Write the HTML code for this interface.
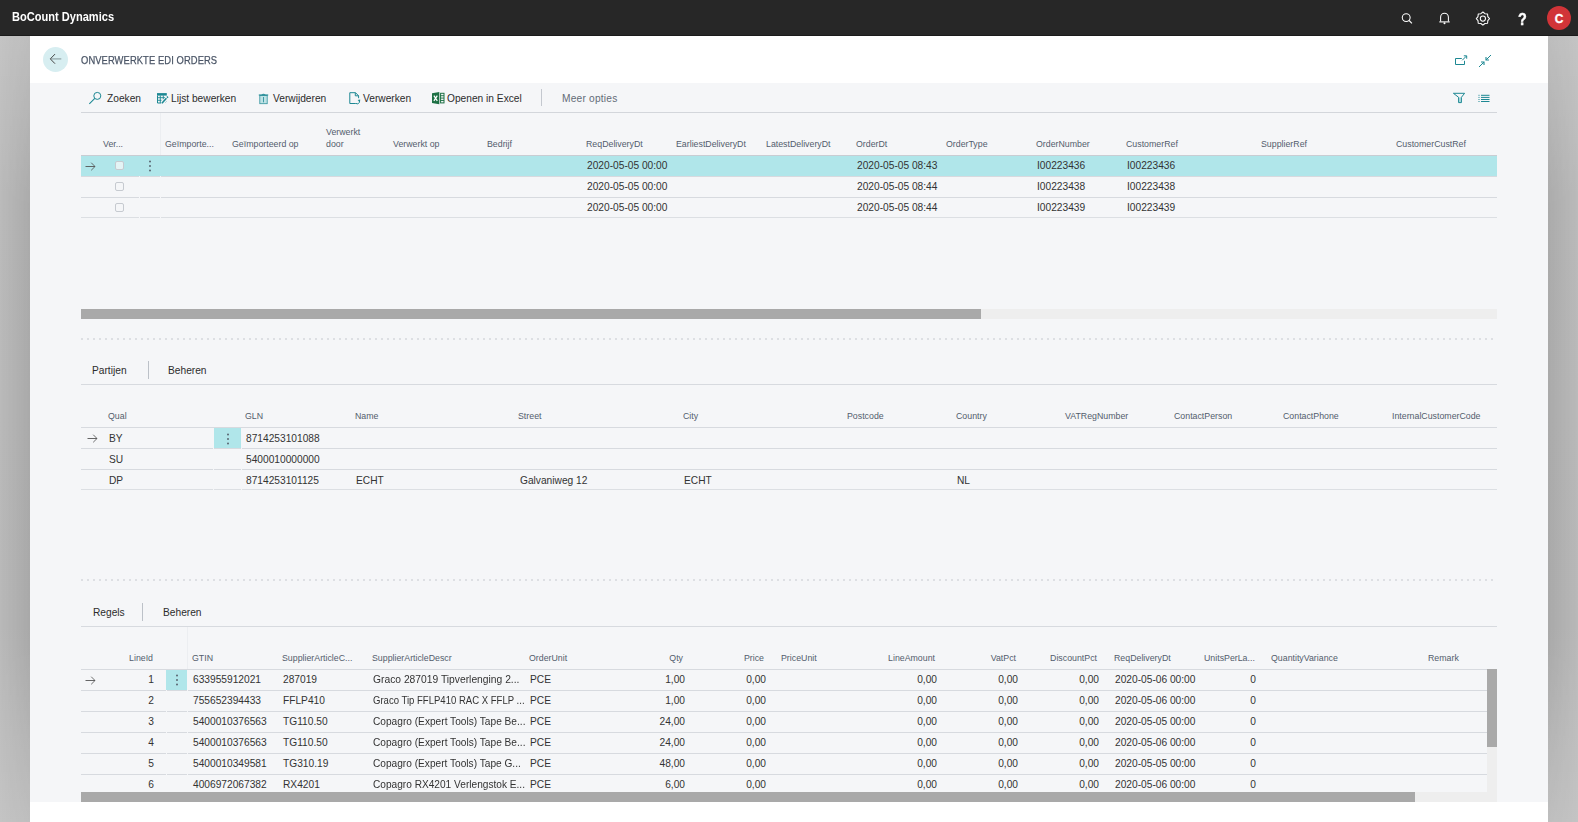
<!DOCTYPE html>
<html><head><meta charset="utf-8"><title>Onverwerkte EDI Orders</title>
<style>
html,body{margin:0;padding:0;}
body{width:1578px;height:822px;overflow:hidden;position:relative;background:#fff;font-family:"Liberation Sans", sans-serif;}
.t{position:absolute;white-space:nowrap;line-height:1;font-family:"Liberation Sans", sans-serif;}
svg{display:block}
</style></head><body>
<div style="position:absolute;left:0px;top:0px;width:1578px;height:36px;background:#272727"></div>
<div style="position:absolute;left:0px;top:35px;width:1578px;height:1px;background:#1b1b1b"></div>
<div class="t" style="left:12px;top:11px;font-size:12px;color:#ffffff;font-weight:bold;transform:scaleX(0.922);transform-origin:0 0">BoCount Dynamics</div>
<svg style="position:absolute;left:1398px;top:10px" width="18" height="18" viewBox="1398 10 18 18"><circle cx="1406.2" cy="17.6" r="3.95" fill="none" stroke="#fff" stroke-width="1.05"/><line x1="1409.1" y1="20.5" x2="1411.9" y2="23.3" stroke="#fff" stroke-width="1.1"/></svg>
<svg style="position:absolute;left:1436px;top:10px" width="16" height="16" viewBox="1436 10 16 16"><path d="M1440.6 21.6 V17.2 A3.9 3.9 0 0 1 1448.4 17.2 V21.6" fill="none" stroke="#fff" stroke-width="1.05"/><line x1="1439.3" y1="21.9" x2="1449.7" y2="21.9" stroke="#fff" stroke-width="1.1"/><circle cx="1444.5" cy="23.2" r="1" fill="#fff"/></svg>
<svg style="position:absolute;left:1472px;top:8px" width="22" height="22" viewBox="1472 8 22 22"><path d="M1482.90 12.00 L1484.93 13.70 L1487.57 13.93 L1487.80 16.57 L1489.50 18.60 L1487.80 20.63 L1487.57 23.27 L1484.93 23.50 L1482.90 25.20 L1480.87 23.50 L1478.23 23.27 L1478.00 20.63 L1476.30 18.60 L1478.00 16.57 L1478.23 13.93 L1480.87 13.70 Z" fill="none" stroke="#fff" stroke-width="1.05" stroke-linejoin="round"/><circle cx="1482.9" cy="18.6" r="2.6" fill="none" stroke="#fff" stroke-width="1.05"/></svg>
<div class="t" style="left:1518px;top:12px;font-size:16px;color:#ffffff;font-weight:bold;transform:scaleX(0.9);transform-origin:0 0;-webkit-text-stroke:0.4px #fff">?</div>
<div style="position:absolute;left:1547px;top:6px;width:24px;height:24px;background:#d13438;border-radius:50%"></div>
<div class="t" style="left:1547px;top:13px;font-size:12px;color:#ffffff;font-weight:bold;width:24px;text-align:center;-webkit-text-stroke:0.3px #fff">C</div>
<svg style="position:absolute;left:0px;top:36px" width="30" height="786" viewBox="0 0 30 786"><defs><linearGradient id="g0v" x1="0" y1="0" x2="0" y2="1"><stop offset="0" stop-color="#c4c4c4"/><stop offset="0.2" stop-color="#bbbbbb"/><stop offset="0.75" stop-color="#b9b9b9"/><stop offset="1" stop-color="#c4c4c4"/></linearGradient><linearGradient id="g0h" x1="0" y1="0" x2="1" y2="0"><stop offset="0" stop-color="#000" stop-opacity="0"/><stop offset="1" stop-color="#000" stop-opacity="0.085"/></linearGradient><linearGradient id="g0m" x1="0" y1="0" x2="0" y2="1"><stop offset="0" stop-color="#fff" stop-opacity="0.35"/><stop offset="0.22" stop-color="#fff" stop-opacity="1"/><stop offset="0.78" stop-color="#fff" stop-opacity="1"/><stop offset="1" stop-color="#fff" stop-opacity="0.3"/></linearGradient><mask id="g0mk"><rect width="30" height="786" fill="url(#g0m)"/></mask></defs><rect width="30" height="786" fill="url(#g0v)"/><rect width="30" height="786" fill="url(#g0h)" mask="url(#g0mk)"/></svg>
<svg style="position:absolute;left:1548px;top:36px" width="30" height="786" viewBox="0 0 30 786"><defs><linearGradient id="g1548v" x1="0" y1="0" x2="0" y2="1"><stop offset="0" stop-color="#c4c4c4"/><stop offset="0.2" stop-color="#bbbbbb"/><stop offset="0.75" stop-color="#b9b9b9"/><stop offset="1" stop-color="#c4c4c4"/></linearGradient><linearGradient id="g1548h" x1="1" y1="0" x2="0" y2="0"><stop offset="0" stop-color="#000" stop-opacity="0"/><stop offset="1" stop-color="#000" stop-opacity="0.085"/></linearGradient><linearGradient id="g1548m" x1="0" y1="0" x2="0" y2="1"><stop offset="0" stop-color="#fff" stop-opacity="0.35"/><stop offset="0.22" stop-color="#fff" stop-opacity="1"/><stop offset="0.78" stop-color="#fff" stop-opacity="1"/><stop offset="1" stop-color="#fff" stop-opacity="0.3"/></linearGradient><mask id="g1548mk"><rect width="30" height="786" fill="url(#g1548m)"/></mask></defs><rect width="30" height="786" fill="url(#g1548v)"/><rect width="30" height="786" fill="url(#g1548h)" mask="url(#g1548mk)"/></svg>
<div style="position:absolute;left:30px;top:36px;width:1518px;height:786px;background:#ffffff"></div>
<div style="position:absolute;left:30px;top:83px;width:1518px;height:719px;background:#f5f6f8"></div>
<div style="position:absolute;left:43px;top:47px;width:25px;height:25px;background:#d7eef1;border-radius:50%"></div>
<svg style="position:absolute;left:46px;top:50px" width="20" height="18" viewBox="46 50 20 18"><line x1="51" y1="58.9" x2="61.3" y2="58.9" stroke="#93a7a9" stroke-width="1.25"/><path d="M55 54.1 L50.3 58.9 L55 63.7" fill="none" stroke="#3c3c3c" stroke-width="0.95"/></svg>
<div class="t" style="left:81px;top:55px;font-size:11px;color:#4a5566;font-weight:normal;transform:scaleX(0.853);transform-origin:0 0;letter-spacing:0.1px;-webkit-text-stroke:0.25px #4a5566">ONVERWERKTE EDI ORDERS</div>
<svg style="position:absolute;left:1452px;top:52px" width="18" height="16" viewBox="1452 52 18 16"><path d="M1461.8 58.5 H1455.5 V64.5 H1464.5 V60.8" fill="none" stroke="#1d8893" stroke-width="1"/><line x1="1462.2" y1="60.3" x2="1466.3" y2="56.2" stroke="#1d8893" stroke-width="1"/><path d="M1463.8 55.8 H1466.7 V58.7" fill="none" stroke="#1d8893" stroke-width="1"/></svg>
<svg style="position:absolute;left:1476px;top:52px" width="18" height="18" viewBox="1476 52 18 18"><line x1="1479" y1="67" x2="1483.8" y2="62.2" stroke="#1d8893" stroke-width="1"/><path d="M1481 62 H1484 V65" fill="none" stroke="#1d8893" stroke-width="1.1"/><line x1="1491" y1="55" x2="1486.2" y2="59.8" stroke="#1d8893" stroke-width="1"/><path d="M1489 60 H1486 V57" fill="none" stroke="#1d8893" stroke-width="1.1"/></svg>
<svg style="position:absolute;left:86px;top:89px" width="16" height="17" viewBox="86 89 16 17"><circle cx="97.3" cy="95.9" r="3.5" fill="none" stroke="#1d8893" stroke-width="1"/><line x1="94.8" y1="98.4" x2="89.3" y2="103.8" stroke="#1d8893" stroke-width="1.05"/></svg>
<div class="t" style="left:107px;top:94px;font-size:10.2px;color:#2c2c2c;font-weight:normal;">Zoeken</div>
<svg style="position:absolute;left:155px;top:91px" width="15" height="15" viewBox="155 91 15 15"><rect x="157" y="93.1" width="9.8" height="2.5" fill="#1d8893"/><path d="M157.5 95.5 V103 H161.2" fill="none" stroke="#1d8893" stroke-width="1"/><path d="M157.5 97.7 H165 M157.5 100.3 H161.5 M160.3 95.5 V103 M163.3 95.5 V99.5" fill="none" stroke="#1d8893" stroke-width="0.9"/><line x1="161.9" y1="103.3" x2="166.4" y2="98.3" stroke="#f5f6f8" stroke-width="3"/><line x1="161.9" y1="103.3" x2="166.4" y2="98.3" stroke="#1d8893" stroke-width="1.6"/><line x1="167" y1="97.6" x2="167.9" y2="96.6" stroke="#1d8893" stroke-width="1.6"/><line x1="165.5" y1="102.5" x2="166.5" y2="101.5" stroke="#1d8893" stroke-width="0.9" opacity="0.6"/></svg>
<div class="t" style="left:171px;top:94px;font-size:10.2px;color:#2c2c2c;font-weight:normal;">Lijst bewerken</div>
<svg style="position:absolute;left:257px;top:91px" width="13" height="15" viewBox="257 91 13 15"><rect x="259.8" y="95.6" width="7.4" height="8.1" fill="#b9e0e4" stroke="#1d8893" stroke-width="0.8" opacity="0.9"/><line x1="258.8" y1="95" x2="268.2" y2="95" stroke="#1d8893" stroke-width="1.1"/><path d="M261.3 94.8 Q263.5 92.6 265.7 94.8 Z" fill="#1d8893"/><line x1="263.5" y1="97" x2="263.5" y2="102.3" stroke="#1d8893" stroke-width="0.8"/></svg>
<div class="t" style="left:273px;top:94px;font-size:10.2px;color:#2c2c2c;font-weight:normal;">Verwijderen</div>
<svg style="position:absolute;left:347px;top:90px" width="15" height="16" viewBox="347 90 15 16"><path d="M355.8 103.5 H349.8 V92.7 H355.5 L358.6 95.8 V98.2" fill="none" stroke="#1d8893" stroke-width="1"/><path d="M355.3 92.7 V95.8 H358.6" fill="none" stroke="#1d8893" stroke-width="1"/><path d="M356 103.4 A2.2 2.2 0 0 0 359.4 101" fill="none" stroke="#1d8893" stroke-width="1"/><path d="M357.6 99.9 L360.2 99.6 L360 102.2 Z" fill="#1d8893"/></svg>
<div class="t" style="left:363px;top:94px;font-size:10.2px;color:#2c2c2c;font-weight:normal;">Verwerken</div>
<svg style="position:absolute;left:430px;top:90px" width="16" height="16" viewBox="430 90 16 16"><path d="M432 93.2 L439.3 91.9 V104.2 L432 102.9 Z" fill="#1d7044"/><path d="M433.9 95.7 L437.3 100.9 M437.3 95.7 L433.9 100.9" stroke="#fff" stroke-width="1.25"/><rect x="440.6" y="93.3" width="3.4" height="9.6" fill="none" stroke="#1d7044" stroke-width="1"/><path d="M440.3 95.7 H444 M440.3 98.1 H444 M440.3 100.5 H444" stroke="#1d7044" stroke-width="0.9"/></svg>
<div class="t" style="left:447px;top:94px;font-size:10.2px;color:#2c2c2c;font-weight:normal;">Openen in Excel</div>
<div style="position:absolute;left:541px;top:89px;width:1px;height:17px;background:#c4c8cf"></div>
<div class="t" style="left:562px;top:94px;font-size:10.2px;color:#636b77;font-weight:normal;letter-spacing:0.2px">Meer opties</div>
<svg style="position:absolute;left:1451px;top:91px" width="16" height="14" viewBox="1451 91 16 14"><path d="M1458.6 97.5 V102.6 H1461.4 V97.5 Z" fill="#b3dfe3"/><path d="M1453.4 93.3 H1464.6 L1461.4 97.3 V102.6 H1458.6 V97.3 Z" fill="none" stroke="#1d8893" stroke-width="1" stroke-linejoin="round"/></svg>
<svg style="position:absolute;left:1477px;top:93px" width="14" height="10" viewBox="1477 93 14 10"><g fill="#1d8893"><rect x="1478.5" y="94.8" width="1" height="1"/><rect x="1481" y="94.8" width="8.5" height="1"/><rect x="1478.5" y="96.9" width="1" height="1"/><rect x="1481" y="96.9" width="8.5" height="1"/><rect x="1478.5" y="99" width="1" height="1"/><rect x="1481" y="99" width="8.5" height="1"/><rect x="1478.5" y="101" width="1" height="1"/><rect x="1481" y="101" width="8.5" height="1"/></g></svg>
<div style="position:absolute;left:81px;top:112px;width:1416px;height:1px;background:#d3d6db"></div>
<div style="position:absolute;left:160px;top:113px;width:1px;height:42px;background:#eceef1"></div>
<div class="t" style="left:103px;top:140px;font-size:8.8px;color:#535d6c;font-weight:normal;">Ver...</div>
<div class="t" style="left:165px;top:140px;font-size:8.8px;color:#535d6c;font-weight:normal;">Geïmporte...</div>
<div class="t" style="left:232px;top:140px;font-size:8.8px;color:#535d6c;font-weight:normal;">Geïmporteerd op</div>
<div class="t" style="left:393px;top:140px;font-size:8.8px;color:#535d6c;font-weight:normal;">Verwerkt op</div>
<div class="t" style="left:487px;top:140px;font-size:8.8px;color:#535d6c;font-weight:normal;">Bedrijf</div>
<div class="t" style="left:586px;top:140px;font-size:8.8px;color:#535d6c;font-weight:normal;">ReqDeliveryDt</div>
<div class="t" style="left:676px;top:140px;font-size:8.8px;color:#535d6c;font-weight:normal;">EarliestDeliveryDt</div>
<div class="t" style="left:766px;top:140px;font-size:8.8px;color:#535d6c;font-weight:normal;">LatestDeliveryDt</div>
<div class="t" style="left:856px;top:140px;font-size:8.8px;color:#535d6c;font-weight:normal;">OrderDt</div>
<div class="t" style="left:946px;top:140px;font-size:8.8px;color:#535d6c;font-weight:normal;">OrderType</div>
<div class="t" style="left:1036px;top:140px;font-size:8.8px;color:#535d6c;font-weight:normal;">OrderNumber</div>
<div class="t" style="left:1126px;top:140px;font-size:8.8px;color:#535d6c;font-weight:normal;">CustomerRef</div>
<div class="t" style="left:1261px;top:140px;font-size:8.8px;color:#535d6c;font-weight:normal;">SupplierRef</div>
<div class="t" style="left:1396px;top:140px;font-size:8.8px;color:#535d6c;font-weight:normal;">CustomerCustRef</div>
<div class="t" style="left:326px;top:128px;font-size:8.8px;color:#535d6c;font-weight:normal;">Verwerkt</div>
<div class="t" style="left:326px;top:140px;font-size:8.8px;color:#535d6c;font-weight:normal;">door</div>
<div style="position:absolute;left:81px;top:155px;width:1416px;height:1px;background:#c9cdd3"></div>
<div style="position:absolute;left:81px;top:156px;width:1416px;height:20px;background:#b0e6ea"></div>
<div style="position:absolute;left:81px;top:176px;width:1416px;height:1px;background:#d7dadf"></div>
<div style="position:absolute;left:81px;top:197px;width:1416px;height:1px;background:#d7dadf"></div>
<div style="position:absolute;left:81px;top:217px;width:1416px;height:1px;background:#dcdfe3"></div>
<svg style="position:absolute;left:85px;top:162px" width="12" height="10" viewBox="0 0 12 10"><line x1="0.5" y1="4.5" x2="10" y2="4.5" stroke="#555" stroke-width="0.9"/><path d="M6.2 0.7 L10 4.5 L6.2 8.3" fill="none" stroke="#555" stroke-width="0.85"/></svg>
<svg style="position:absolute;left:147px;top:158.5px" width="6" height="14" viewBox="0 0 6 14"><circle cx="3" cy="2.5" r="0.95" fill="#56606b"/><circle cx="3" cy="7" r="0.95" fill="#56606b"/><circle cx="3" cy="11.5" r="0.95" fill="#56606b"/></svg>
<div style="position:absolute;left:115px;top:161px;width:9px;height:9px;border:1px solid #c6cad0;border-radius:2px;box-sizing:border-box;background:#e4f4f5"></div>
<div style="position:absolute;left:115px;top:182px;width:9px;height:9px;border:1px solid #c6cad0;border-radius:2px;box-sizing:border-box;background:transparent"></div>
<div style="position:absolute;left:115px;top:203px;width:9px;height:9px;border:1px solid #c6cad0;border-radius:2px;box-sizing:border-box;background:transparent"></div>
<div style="position:absolute;left:139px;top:176px;width:1px;height:1px;background:#f5f6f8"></div>
<div style="position:absolute;left:160px;top:176px;width:1px;height:1px;background:#f5f6f8"></div>
<div style="position:absolute;left:139px;top:197px;width:1px;height:1px;background:#f5f6f8"></div>
<div style="position:absolute;left:160px;top:197px;width:1px;height:1px;background:#f5f6f8"></div>
<div style="position:absolute;left:139px;top:217px;width:1px;height:1px;background:#f5f6f8"></div>
<div style="position:absolute;left:160px;top:217px;width:1px;height:1px;background:#f5f6f8"></div>
<div class="t" style="left:587px;top:161px;font-size:10.2px;color:#333333;font-weight:normal;">2020-05-05 00:00</div>
<div class="t" style="left:857px;top:161px;font-size:10.2px;color:#333333;font-weight:normal;">2020-05-05 08:43</div>
<div class="t" style="left:1037px;top:161px;font-size:10.2px;color:#333333;font-weight:normal;">I00223436</div>
<div class="t" style="left:1127px;top:161px;font-size:10.2px;color:#333333;font-weight:normal;">I00223436</div>
<div class="t" style="left:587px;top:182px;font-size:10.2px;color:#333333;font-weight:normal;">2020-05-05 00:00</div>
<div class="t" style="left:857px;top:182px;font-size:10.2px;color:#333333;font-weight:normal;">2020-05-05 08:44</div>
<div class="t" style="left:1037px;top:182px;font-size:10.2px;color:#333333;font-weight:normal;">I00223438</div>
<div class="t" style="left:1127px;top:182px;font-size:10.2px;color:#333333;font-weight:normal;">I00223438</div>
<div class="t" style="left:587px;top:203px;font-size:10.2px;color:#333333;font-weight:normal;">2020-05-05 00:00</div>
<div class="t" style="left:857px;top:203px;font-size:10.2px;color:#333333;font-weight:normal;">2020-05-05 08:44</div>
<div class="t" style="left:1037px;top:203px;font-size:10.2px;color:#333333;font-weight:normal;">I00223439</div>
<div class="t" style="left:1127px;top:203px;font-size:10.2px;color:#333333;font-weight:normal;">I00223439</div>
<div style="position:absolute;left:81px;top:309px;width:1416px;height:10px;background:#eeeeee"></div>
<div style="position:absolute;left:81px;top:309px;width:900px;height:10px;background:#a9a9a9"></div>
<div style="position:absolute;left:81px;top:338px;width:1416px;height:2px;background-image:linear-gradient(90deg,#dddfe3 2px,transparent 2px);background-size:6px 2px"></div>
<div class="t" style="left:92px;top:366px;font-size:10.2px;color:#2c2c2c;font-weight:normal;">Partijen</div>
<div style="position:absolute;left:148px;top:361px;width:1px;height:18px;background:#bcc1c8"></div>
<div class="t" style="left:168px;top:366px;font-size:10.2px;color:#2c2c2c;font-weight:normal;">Beheren</div>
<div style="position:absolute;left:81px;top:384px;width:1416px;height:1px;background:#d7dadf"></div>
<div class="t" style="left:108px;top:412px;font-size:8.8px;color:#535d6c;font-weight:normal;">Qual</div>
<div class="t" style="left:245px;top:412px;font-size:8.8px;color:#535d6c;font-weight:normal;">GLN</div>
<div class="t" style="left:355px;top:412px;font-size:8.8px;color:#535d6c;font-weight:normal;">Name</div>
<div class="t" style="left:518px;top:412px;font-size:8.8px;color:#535d6c;font-weight:normal;">Street</div>
<div class="t" style="left:683px;top:412px;font-size:8.8px;color:#535d6c;font-weight:normal;">City</div>
<div class="t" style="left:847px;top:412px;font-size:8.8px;color:#535d6c;font-weight:normal;">Postcode</div>
<div class="t" style="left:956px;top:412px;font-size:8.8px;color:#535d6c;font-weight:normal;">Country</div>
<div class="t" style="left:1065px;top:412px;font-size:8.8px;color:#535d6c;font-weight:normal;">VATRegNumber</div>
<div class="t" style="left:1174px;top:412px;font-size:8.8px;color:#535d6c;font-weight:normal;">ContactPerson</div>
<div class="t" style="left:1283px;top:412px;font-size:8.8px;color:#535d6c;font-weight:normal;">ContactPhone</div>
<div class="t" style="left:1392px;top:412px;font-size:8.8px;color:#535d6c;font-weight:normal;">InternalCustomerCode</div>
<div style="position:absolute;left:81px;top:427px;width:1416px;height:1px;background:#d7dadf"></div>
<div style="position:absolute;left:81px;top:448px;width:1416px;height:1px;background:#d7dadf"></div>
<div style="position:absolute;left:81px;top:469px;width:1416px;height:1px;background:#d7dadf"></div>
<div style="position:absolute;left:81px;top:489px;width:1416px;height:1px;background:#dcdfe3"></div>
<div style="position:absolute;left:214px;top:428px;width:27px;height:20px;background:#b0e6ea"></div>
<div style="position:absolute;left:213px;top:448px;width:1px;height:1px;background:#f5f6f8"></div>
<div style="position:absolute;left:241px;top:448px;width:1px;height:1px;background:#f5f6f8"></div>
<div style="position:absolute;left:213px;top:469px;width:1px;height:1px;background:#f5f6f8"></div>
<div style="position:absolute;left:241px;top:469px;width:1px;height:1px;background:#f5f6f8"></div>
<div style="position:absolute;left:213px;top:489px;width:1px;height:1px;background:#f5f6f8"></div>
<div style="position:absolute;left:241px;top:489px;width:1px;height:1px;background:#f5f6f8"></div>
<svg style="position:absolute;left:225px;top:431.5px" width="6" height="14" viewBox="0 0 6 14"><circle cx="3" cy="2.5" r="0.95" fill="#56606b"/><circle cx="3" cy="7" r="0.95" fill="#56606b"/><circle cx="3" cy="11.5" r="0.95" fill="#56606b"/></svg>
<svg style="position:absolute;left:87px;top:434px" width="12" height="10" viewBox="0 0 12 10"><line x1="0.5" y1="4.5" x2="10" y2="4.5" stroke="#555" stroke-width="0.9"/><path d="M6.2 0.7 L10 4.5 L6.2 8.3" fill="none" stroke="#555" stroke-width="0.85"/></svg>
<div class="t" style="left:109px;top:434px;font-size:10.2px;color:#333333;font-weight:normal;">BY</div>
<div class="t" style="left:246px;top:434px;font-size:10.2px;color:#333333;font-weight:normal;">8714253101088</div>
<div class="t" style="left:109px;top:455px;font-size:10.2px;color:#333333;font-weight:normal;">SU</div>
<div class="t" style="left:246px;top:455px;font-size:10.2px;color:#333333;font-weight:normal;">5400010000000</div>
<div class="t" style="left:109px;top:476px;font-size:10.2px;color:#333333;font-weight:normal;">DP</div>
<div class="t" style="left:246px;top:476px;font-size:10.2px;color:#333333;font-weight:normal;">8714253101125</div>
<div class="t" style="left:356px;top:476px;font-size:10.2px;color:#333333;font-weight:normal;">ECHT</div>
<div class="t" style="left:520px;top:476px;font-size:10.2px;color:#333333;font-weight:normal;">Galvaniweg 12</div>
<div class="t" style="left:684px;top:476px;font-size:10.2px;color:#333333;font-weight:normal;">ECHT</div>
<div class="t" style="left:957px;top:476px;font-size:10.2px;color:#333333;font-weight:normal;">NL</div>
<div style="position:absolute;left:81px;top:579px;width:1416px;height:2px;background-image:linear-gradient(90deg,#dddfe3 2px,transparent 2px);background-size:6px 2px"></div>
<div class="t" style="left:93px;top:608px;font-size:10.2px;color:#2c2c2c;font-weight:normal;">Regels</div>
<div style="position:absolute;left:142px;top:603px;width:1px;height:18px;background:#bcc1c8"></div>
<div class="t" style="left:163px;top:608px;font-size:10.2px;color:#2c2c2c;font-weight:normal;">Beheren</div>
<div style="position:absolute;left:81px;top:626px;width:1416px;height:1px;background:#d7dadf"></div>
<div style="position:absolute;left:187px;top:627px;width:1px;height:42px;background:#eceef1"></div>
<div class="t" style="left:-247px;width:400px;text-align:right;top:654px;font-size:8.8px;color:#535d6c;font-weight:normal;">LineId</div>
<div class="t" style="left:192px;top:654px;font-size:8.8px;color:#535d6c;font-weight:normal;">GTIN</div>
<div class="t" style="left:282px;top:654px;font-size:8.8px;color:#535d6c;font-weight:normal;">SupplierArticleC...</div>
<div class="t" style="left:372px;top:654px;font-size:8.8px;color:#535d6c;font-weight:normal;">SupplierArticleDescr</div>
<div class="t" style="left:529px;top:654px;font-size:8.8px;color:#535d6c;font-weight:normal;">OrderUnit</div>
<div class="t" style="left:283px;width:400px;text-align:right;top:654px;font-size:8.8px;color:#535d6c;font-weight:normal;">Qty</div>
<div class="t" style="left:364px;width:400px;text-align:right;top:654px;font-size:8.8px;color:#535d6c;font-weight:normal;">Price</div>
<div class="t" style="left:781px;top:654px;font-size:8.8px;color:#535d6c;font-weight:normal;">PriceUnit</div>
<div class="t" style="left:535px;width:400px;text-align:right;top:654px;font-size:8.8px;color:#535d6c;font-weight:normal;">LineAmount</div>
<div class="t" style="left:616px;width:400px;text-align:right;top:654px;font-size:8.8px;color:#535d6c;font-weight:normal;">VatPct</div>
<div class="t" style="left:697px;width:400px;text-align:right;top:654px;font-size:8.8px;color:#535d6c;font-weight:normal;">DiscountPct</div>
<div class="t" style="left:1114px;top:654px;font-size:8.8px;color:#535d6c;font-weight:normal;">ReqDeliveryDt</div>
<div class="t" style="left:1204px;top:654px;font-size:8.8px;color:#535d6c;font-weight:normal;">UnitsPerLa...</div>
<div class="t" style="left:1271px;top:654px;font-size:8.8px;color:#535d6c;font-weight:normal;">QuantityVariance</div>
<div class="t" style="left:1428px;top:654px;font-size:8.8px;color:#535d6c;font-weight:normal;">Remark</div>
<div style="position:absolute;left:81px;top:669px;width:1406px;height:1px;background:#d7dadf"></div>
<div style="position:absolute;left:81px;top:690px;width:1406px;height:1px;background:#d7dadf"></div>
<div style="position:absolute;left:81px;top:711px;width:1406px;height:1px;background:#d7dadf"></div>
<div style="position:absolute;left:81px;top:732px;width:1406px;height:1px;background:#d7dadf"></div>
<div style="position:absolute;left:81px;top:753px;width:1406px;height:1px;background:#d7dadf"></div>
<div style="position:absolute;left:81px;top:774px;width:1406px;height:1px;background:#d7dadf"></div>
<div style="position:absolute;left:166px;top:670px;width:21px;height:20px;background:#b0e6ea"></div>
<div style="position:absolute;left:166px;top:690px;width:1px;height:1px;background:#f5f6f8"></div>
<div style="position:absolute;left:187px;top:690px;width:1px;height:1px;background:#f5f6f8"></div>
<div style="position:absolute;left:166px;top:711px;width:1px;height:1px;background:#f5f6f8"></div>
<div style="position:absolute;left:187px;top:711px;width:1px;height:1px;background:#f5f6f8"></div>
<div style="position:absolute;left:166px;top:732px;width:1px;height:1px;background:#f5f6f8"></div>
<div style="position:absolute;left:187px;top:732px;width:1px;height:1px;background:#f5f6f8"></div>
<div style="position:absolute;left:166px;top:753px;width:1px;height:1px;background:#f5f6f8"></div>
<div style="position:absolute;left:187px;top:753px;width:1px;height:1px;background:#f5f6f8"></div>
<div style="position:absolute;left:166px;top:774px;width:1px;height:1px;background:#f5f6f8"></div>
<div style="position:absolute;left:187px;top:774px;width:1px;height:1px;background:#f5f6f8"></div>
<svg style="position:absolute;left:173.5px;top:673px" width="6" height="14" viewBox="0 0 6 14"><circle cx="3" cy="2.5" r="0.95" fill="#56606b"/><circle cx="3" cy="7" r="0.95" fill="#56606b"/><circle cx="3" cy="11.5" r="0.95" fill="#56606b"/></svg>
<svg style="position:absolute;left:85px;top:676px" width="12" height="10" viewBox="0 0 12 10"><line x1="0.5" y1="4.5" x2="10" y2="4.5" stroke="#555" stroke-width="0.9"/><path d="M6.2 0.7 L10 4.5 L6.2 8.3" fill="none" stroke="#555" stroke-width="0.85"/></svg>
<div class="t" style="left:-246px;width:400px;text-align:right;top:675px;font-size:10.2px;color:#333333;font-weight:normal;">1</div>
<div class="t" style="left:193px;top:675px;font-size:10.2px;color:#333333;font-weight:normal;">633955912021</div>
<div class="t" style="left:283px;top:675px;font-size:10.2px;color:#333333;font-weight:normal;">287019</div>
<div class="t" style="left:373px;top:675px;font-size:10.2px;color:#333333;font-weight:normal;transform:scaleX(1.01);transform-origin:0 0">Graco 287019 Tipverlenging 2...</div>
<div class="t" style="left:530px;top:675px;font-size:10.2px;color:#333333;font-weight:normal;">PCE</div>
<div class="t" style="left:285px;width:400px;text-align:right;top:675px;font-size:10.2px;color:#333333;font-weight:normal;">1,00</div>
<div class="t" style="left:366px;width:400px;text-align:right;top:675px;font-size:10.2px;color:#333333;font-weight:normal;">0,00</div>
<div class="t" style="left:537px;width:400px;text-align:right;top:675px;font-size:10.2px;color:#333333;font-weight:normal;">0,00</div>
<div class="t" style="left:618px;width:400px;text-align:right;top:675px;font-size:10.2px;color:#333333;font-weight:normal;">0,00</div>
<div class="t" style="left:699px;width:400px;text-align:right;top:675px;font-size:10.2px;color:#333333;font-weight:normal;">0,00</div>
<div class="t" style="left:1115px;top:675px;font-size:10.2px;color:#333333;font-weight:normal;">2020-05-06 00:00</div>
<div class="t" style="left:856px;width:400px;text-align:right;top:675px;font-size:10.2px;color:#333333;font-weight:normal;">0</div>
<div class="t" style="left:-246px;width:400px;text-align:right;top:696px;font-size:10.2px;color:#333333;font-weight:normal;">2</div>
<div class="t" style="left:193px;top:696px;font-size:10.2px;color:#333333;font-weight:normal;">755652394433</div>
<div class="t" style="left:283px;top:696px;font-size:10.2px;color:#333333;font-weight:normal;">FFLP410</div>
<div class="t" style="left:373px;top:696px;font-size:10.2px;color:#333333;font-weight:normal;transform:scaleX(0.937);transform-origin:0 0">Graco Tip FFLP410 RAC X FFLP ...</div>
<div class="t" style="left:530px;top:696px;font-size:10.2px;color:#333333;font-weight:normal;">PCE</div>
<div class="t" style="left:285px;width:400px;text-align:right;top:696px;font-size:10.2px;color:#333333;font-weight:normal;">1,00</div>
<div class="t" style="left:366px;width:400px;text-align:right;top:696px;font-size:10.2px;color:#333333;font-weight:normal;">0,00</div>
<div class="t" style="left:537px;width:400px;text-align:right;top:696px;font-size:10.2px;color:#333333;font-weight:normal;">0,00</div>
<div class="t" style="left:618px;width:400px;text-align:right;top:696px;font-size:10.2px;color:#333333;font-weight:normal;">0,00</div>
<div class="t" style="left:699px;width:400px;text-align:right;top:696px;font-size:10.2px;color:#333333;font-weight:normal;">0,00</div>
<div class="t" style="left:1115px;top:696px;font-size:10.2px;color:#333333;font-weight:normal;">2020-05-06 00:00</div>
<div class="t" style="left:856px;width:400px;text-align:right;top:696px;font-size:10.2px;color:#333333;font-weight:normal;">0</div>
<div class="t" style="left:-246px;width:400px;text-align:right;top:717px;font-size:10.2px;color:#333333;font-weight:normal;">3</div>
<div class="t" style="left:193px;top:717px;font-size:10.2px;color:#333333;font-weight:normal;">5400010376563</div>
<div class="t" style="left:283px;top:717px;font-size:10.2px;color:#333333;font-weight:normal;">TG110.50</div>
<div class="t" style="left:373px;top:717px;font-size:10.2px;color:#333333;font-weight:normal;transform:scaleX(0.996);transform-origin:0 0">Copagro (Expert Tools) Tape Be...</div>
<div class="t" style="left:530px;top:717px;font-size:10.2px;color:#333333;font-weight:normal;">PCE</div>
<div class="t" style="left:285px;width:400px;text-align:right;top:717px;font-size:10.2px;color:#333333;font-weight:normal;">24,00</div>
<div class="t" style="left:366px;width:400px;text-align:right;top:717px;font-size:10.2px;color:#333333;font-weight:normal;">0,00</div>
<div class="t" style="left:537px;width:400px;text-align:right;top:717px;font-size:10.2px;color:#333333;font-weight:normal;">0,00</div>
<div class="t" style="left:618px;width:400px;text-align:right;top:717px;font-size:10.2px;color:#333333;font-weight:normal;">0,00</div>
<div class="t" style="left:699px;width:400px;text-align:right;top:717px;font-size:10.2px;color:#333333;font-weight:normal;">0,00</div>
<div class="t" style="left:1115px;top:717px;font-size:10.2px;color:#333333;font-weight:normal;">2020-05-05 00:00</div>
<div class="t" style="left:856px;width:400px;text-align:right;top:717px;font-size:10.2px;color:#333333;font-weight:normal;">0</div>
<div class="t" style="left:-246px;width:400px;text-align:right;top:738px;font-size:10.2px;color:#333333;font-weight:normal;">4</div>
<div class="t" style="left:193px;top:738px;font-size:10.2px;color:#333333;font-weight:normal;">5400010376563</div>
<div class="t" style="left:283px;top:738px;font-size:10.2px;color:#333333;font-weight:normal;">TG110.50</div>
<div class="t" style="left:373px;top:738px;font-size:10.2px;color:#333333;font-weight:normal;transform:scaleX(0.996);transform-origin:0 0">Copagro (Expert Tools) Tape Be...</div>
<div class="t" style="left:530px;top:738px;font-size:10.2px;color:#333333;font-weight:normal;">PCE</div>
<div class="t" style="left:285px;width:400px;text-align:right;top:738px;font-size:10.2px;color:#333333;font-weight:normal;">24,00</div>
<div class="t" style="left:366px;width:400px;text-align:right;top:738px;font-size:10.2px;color:#333333;font-weight:normal;">0,00</div>
<div class="t" style="left:537px;width:400px;text-align:right;top:738px;font-size:10.2px;color:#333333;font-weight:normal;">0,00</div>
<div class="t" style="left:618px;width:400px;text-align:right;top:738px;font-size:10.2px;color:#333333;font-weight:normal;">0,00</div>
<div class="t" style="left:699px;width:400px;text-align:right;top:738px;font-size:10.2px;color:#333333;font-weight:normal;">0,00</div>
<div class="t" style="left:1115px;top:738px;font-size:10.2px;color:#333333;font-weight:normal;">2020-05-06 00:00</div>
<div class="t" style="left:856px;width:400px;text-align:right;top:738px;font-size:10.2px;color:#333333;font-weight:normal;">0</div>
<div class="t" style="left:-246px;width:400px;text-align:right;top:759px;font-size:10.2px;color:#333333;font-weight:normal;">5</div>
<div class="t" style="left:193px;top:759px;font-size:10.2px;color:#333333;font-weight:normal;">5400010349581</div>
<div class="t" style="left:283px;top:759px;font-size:10.2px;color:#333333;font-weight:normal;">TG310.19</div>
<div class="t" style="left:373px;top:759px;font-size:10.2px;color:#333333;font-weight:normal;transform:scaleX(0.995);transform-origin:0 0">Copagro (Expert Tools) Tape G...</div>
<div class="t" style="left:530px;top:759px;font-size:10.2px;color:#333333;font-weight:normal;">PCE</div>
<div class="t" style="left:285px;width:400px;text-align:right;top:759px;font-size:10.2px;color:#333333;font-weight:normal;">48,00</div>
<div class="t" style="left:366px;width:400px;text-align:right;top:759px;font-size:10.2px;color:#333333;font-weight:normal;">0,00</div>
<div class="t" style="left:537px;width:400px;text-align:right;top:759px;font-size:10.2px;color:#333333;font-weight:normal;">0,00</div>
<div class="t" style="left:618px;width:400px;text-align:right;top:759px;font-size:10.2px;color:#333333;font-weight:normal;">0,00</div>
<div class="t" style="left:699px;width:400px;text-align:right;top:759px;font-size:10.2px;color:#333333;font-weight:normal;">0,00</div>
<div class="t" style="left:1115px;top:759px;font-size:10.2px;color:#333333;font-weight:normal;">2020-05-05 00:00</div>
<div class="t" style="left:856px;width:400px;text-align:right;top:759px;font-size:10.2px;color:#333333;font-weight:normal;">0</div>
<div class="t" style="left:-246px;width:400px;text-align:right;top:780px;font-size:10.2px;color:#333333;font-weight:normal;">6</div>
<div class="t" style="left:193px;top:780px;font-size:10.2px;color:#333333;font-weight:normal;">4006972067382</div>
<div class="t" style="left:283px;top:780px;font-size:10.2px;color:#333333;font-weight:normal;">RX4201</div>
<div class="t" style="left:373px;top:780px;font-size:10.2px;color:#333333;font-weight:normal;transform:scaleX(0.994);transform-origin:0 0">Copagro RX4201 Verlengstok E...</div>
<div class="t" style="left:530px;top:780px;font-size:10.2px;color:#333333;font-weight:normal;">PCE</div>
<div class="t" style="left:285px;width:400px;text-align:right;top:780px;font-size:10.2px;color:#333333;font-weight:normal;">6,00</div>
<div class="t" style="left:366px;width:400px;text-align:right;top:780px;font-size:10.2px;color:#333333;font-weight:normal;">0,00</div>
<div class="t" style="left:537px;width:400px;text-align:right;top:780px;font-size:10.2px;color:#333333;font-weight:normal;">0,00</div>
<div class="t" style="left:618px;width:400px;text-align:right;top:780px;font-size:10.2px;color:#333333;font-weight:normal;">0,00</div>
<div class="t" style="left:699px;width:400px;text-align:right;top:780px;font-size:10.2px;color:#333333;font-weight:normal;">0,00</div>
<div class="t" style="left:1115px;top:780px;font-size:10.2px;color:#333333;font-weight:normal;">2020-05-06 00:00</div>
<div class="t" style="left:856px;width:400px;text-align:right;top:780px;font-size:10.2px;color:#333333;font-weight:normal;">0</div>
<div style="position:absolute;left:1487px;top:669px;width:10px;height:133px;background:#eeeeee"></div>
<div style="position:absolute;left:1487px;top:669px;width:10px;height:78px;background:#a9a9a9"></div>
<div style="position:absolute;left:81px;top:792px;width:1416px;height:10px;background:#eeeeee"></div>
<div style="position:absolute;left:81px;top:792px;width:1334px;height:10px;background:#a9a9a9"></div>
<div style="position:absolute;left:30px;top:802px;width:1518px;height:20px;background:#ffffff"></div>
</body></html>
